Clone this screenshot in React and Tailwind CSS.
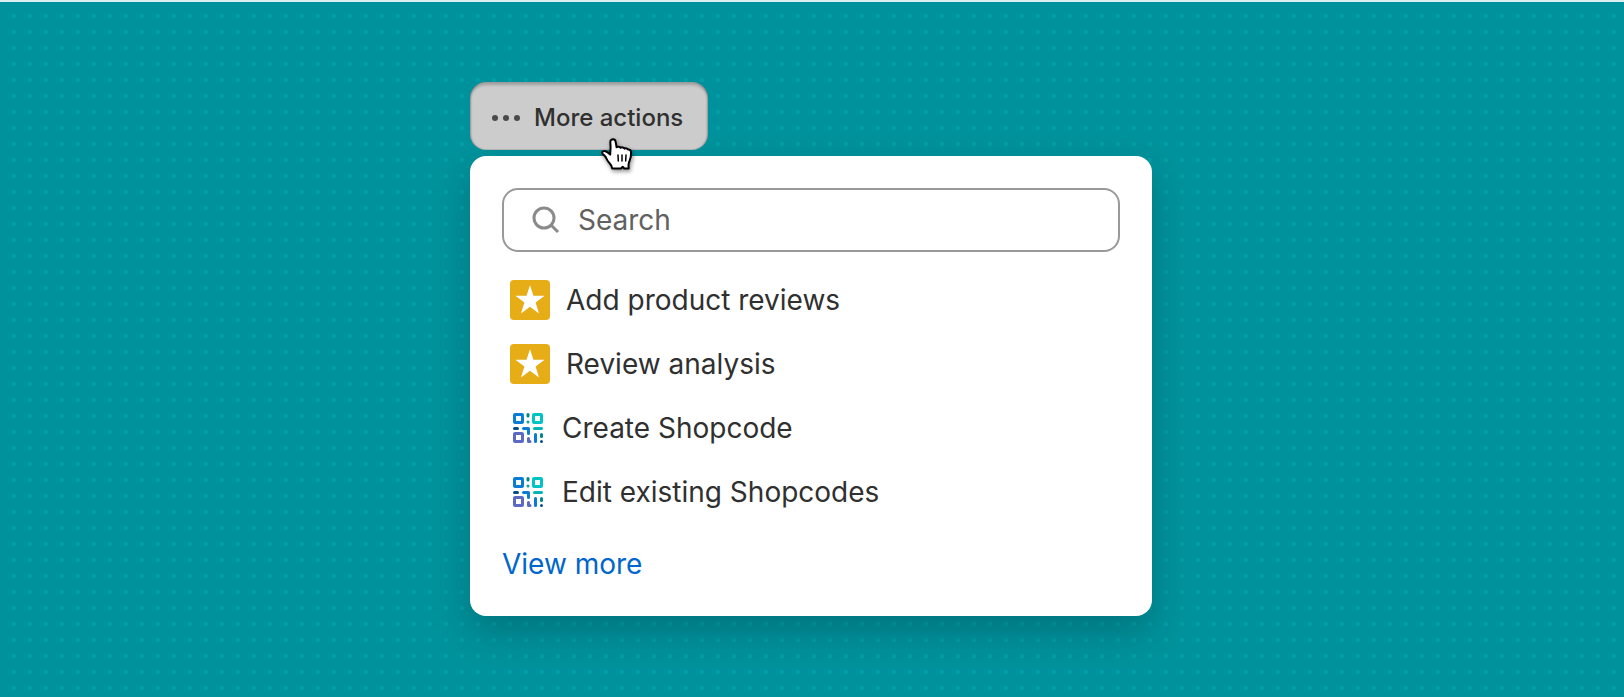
import { useState } from 'react';

const actions = [
  { icon: StarIcon, label: 'Add product reviews' },
  { icon: StarIcon, label: 'Review analysis' },
  { icon: ShopcodeIcon, label: 'Create Shopcode' },
  { icon: ShopcodeIcon, label: 'Edit existing Shopcodes' },
];

function StarIcon() {
  return (
    <svg className="size-10 shrink-0" viewBox="0 0 40 40" aria-hidden="true">
      <rect width="40" height="40" rx="4" fill="#e6ad17" />
      <path d="M20 5.300l3.500 10.400h11.100l-9 6.700 3.400 11.100-9-6.700-9 6.700 3.400-11.100-9-6.700h11.100z" fill="#fff" />
    </svg>
  );
}

function ShopcodeIcon() {
  return (
    <svg className="size-9 shrink-0" viewBox="-3 -3 36 36" aria-hidden="true">
      <g fill="none" strokeWidth="3">
        <rect x="1.5" y="1.5" width="8" height="8" rx="0.6" stroke="#0a7bd6" />
        <rect x="20.5" y="1.5" width="8" height="8" rx="0.6" stroke="#00c4c4" />
        <rect x="1.5" y="20.5" width="8" height="8" rx="0.6" stroke="#5c6ac4" />
        <path d="M10.5 15.5h5v5" stroke="#0a7bd6" strokeLinecap="round" strokeLinejoin="round" />
      </g>
      <rect x="13.5" y="0" width="3" height="4.5" rx="1.5" fill="#00848e" />
      <rect x="13.5" y="7.5" width="3" height="3" rx="1.5" fill="#00a5a8" />
      <rect x="0" y="14" width="6" height="3" rx="1.5" fill="#084e8a" />
      <rect x="20" y="14" width="10" height="3" rx="1.5" fill="#00b5b5" />
      <path d="M14 25.5a1.5 1.5 0 0 1 3 0V27a1.5 1.5 0 0 1 0 3h-1.5a1.5 1.5 0 0 1-1.5-1.5z" fill="#5c6ac4" />
      <rect x="21" y="20" width="3" height="10" rx="1.5" fill="#0a7bd6" />
      <rect x="27" y="20" width="3" height="5" rx="1.5" fill="#00848e" />
      <rect x="27" y="27" width="3" height="3" rx="1.5" fill="#084e8a" />
    </svg>
  );
}

function HandCursor() {
  return (
    <svg
      className="pointer-events-none absolute top-[55px] left-[131px] z-10 h-9 w-9 drop-shadow-[1px_2px_2px_rgba(0,0,0,0.45)]"
      viewBox="0 0 36 36"
      aria-hidden="true"
    >
      <path
        d="M12 2.2c1.4 0 2.4 1 2.6 2.4l1 5.600c1-.8 3.300-.7 4 .6 1.100-.8 3.200-.5 3.900.8 1.200-.6 3.200-.2 3.700 1 1.600-.2 2.700.8 2.800 2.400.2 3-.2 5.800-1.300 8.400-.9 1.600-1.200 3-1.200 4.600l.2 3.500h-4.500l-1.500-1.800-1.800 1.800H11.200c-.3-2.800-1.800-4.500-3.400-6.200C6 23.300 5.500 21 4.200 19.400 3 18 1.500 17.400 1.200 16c-.2-1.500 1.500-2.300 3.200-1.800 1.800.5 3.200 1.800 4.800 3.400l.4-7.100-.3-5.700C9.300 3.200 10.500 2.200 12 2.200z"
        fill="#fff"
        stroke="#000"
        strokeWidth="2"
        strokeLinejoin="round"
      />
      <path d="M17 18l.3 6M21 18v6M25 18l-.3 6" fill="none" stroke="#000" strokeWidth="1.5" strokeLinecap="round" />
    </svg>
  );
}

export default function App() {
  const [query, setQuery] = useState('');

  return (
    <main className="min-h-screen border-t-2 border-[#d9eef0] bg-[#00929c] bg-[linear-gradient(#00929c_12px,transparent_12px),linear-gradient(90deg,#00929c_12px,#009da6_12px)] bg-size-[16px_16px] px-4 pt-20 pb-20 font-[Inter,'Liberation_Sans',sans-serif] text-[#303030]">
      <div className="mx-auto w-full max-w-[684px] pr-0.5">
        <div className="relative w-fit">
          <button
            type="button"
            aria-expanded="true"
            className="flex h-[68px] items-center gap-3 rounded-2xl bg-[#cccccc] pr-[25px] pl-5 text-2xl font-medium shadow-[inset_0_4px_3px_-1px_rgba(0,0,0,0.22),inset_2px_0_2px_-1px_rgba(0,0,0,0.25),inset_-2px_0_2px_-1px_rgba(0,0,0,0.25),inset_0_-1px_1px_rgba(0,0,0,0.1)]"
          >
            <svg className="h-8 w-8" viewBox="0 0 32 32" fill="#4a4a4a" aria-hidden="true">
              <circle cx="5" cy="18" r="3" />
              <circle cx="16" cy="18" r="3" />
              <circle cx="27" cy="18" r="3" />
            </svg>
            <span className="pt-1">More actions</span>
          </button>
          <HandCursor />
        </div>

        <div className="mt-1.5 rounded-2xl bg-white p-8 shadow-[0_16px_36px_rgba(0,0,0,0.2)]">
          <label className="flex h-16 items-center gap-[18px] rounded-2xl border-2 border-[#999999] pl-7">
            <svg className="h-7 w-7 shrink-0" viewBox="0 0 28 28" fill="none" stroke="#8a8a8a" strokeWidth="3" aria-hidden="true">
              <circle cx="12" cy="12" r="10" />
              <path d="M19 19l7 7" />
            </svg>
            <input
              type="text"
              aria-label="Search"
              placeholder="Search"
              value={query}
              onChange={e => setQuery(e.target.value)}
              className="min-w-0 flex-1 bg-transparent text-[28px] outline-none placeholder:text-[#616161]"
            />
          </label>

          <ul className="mt-4">
            {actions.map(({ icon: Icon, label }) => (
              <li key={label}>
                <button type="button" className="flex h-16 w-full items-center gap-4 px-2 text-left text-[28px]">
                  <Icon />
                  {label}
                </button>
              </li>
            ))}
          </ul>

          <a href="#more" className="mt-5 inline-flex h-10 items-center text-[28px] text-[#0066cc]">
            View more
          </a>
        </div>
      </div>
    </main>
  );
}
